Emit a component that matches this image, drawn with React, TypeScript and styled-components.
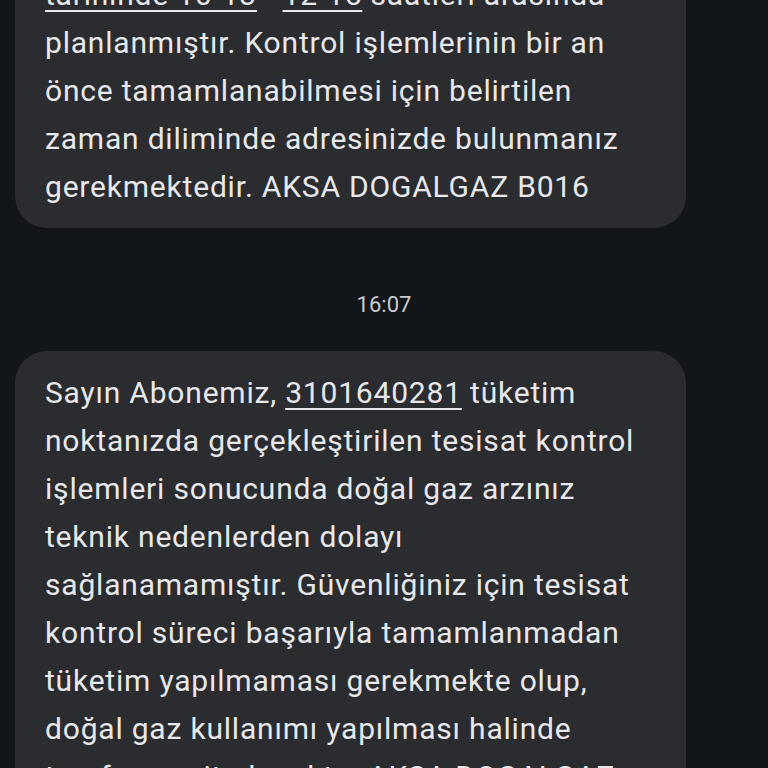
import React from "react";
import styled, { createGlobalStyle } from "styled-components";

type Part = { text: string; link?: boolean };
type MessageType = { lines: Part[][] };

const GlobalStyle = createGlobalStyle`
  html, body {
    margin: 0;
    padding: 0;
    background: #121519;
    overflow: hidden;
  }
  * {
    box-sizing: border-box;
  }
`;

const first: MessageType = {
  lines: [
    [
      { text: "tarihinde 10-13", link: true },
      { text: " - " },
      { text: "12-15", link: true },
      { text: " saatleri arasında" },
    ],
    [{ text: "planlanmıştır. Kontrol işlemlerinin bir an" }],
    [{ text: "önce tamamlanabilmesi için belirtilen" }],
    [{ text: "zaman diliminde adresinizde bulunmanız" }],
    [{ text: "gerekmektedir. AKSA DOGALGAZ B016" }],
  ],
};

const second: MessageType = {
  lines: [
    [
      { text: "Sayın Abonemiz, " },
      { text: "3101640281", link: true },
      { text: " tüketim" },
    ],
    [{ text: "noktanızda gerçekleştirilen tesisat kontrol" }],
    [{ text: "işlemleri sonucunda doğal gaz arzınız" }],
    [{ text: "teknik nedenlerden dolayı" }],
    [{ text: "sağlanamamıştır. Güvenliğiniz için tesisat" }],
    [{ text: "kontrol süreci başarıyla tamamlanmadan" }],
    [{ text: "tüketim yapılmaması gerekmekte olup," }],
    [{ text: "doğal gaz kullanımı yapılması halinde" }],
    [{ text: "tarafınıza ait olacaktır. AKSA DOGALGAZ" }],
  ],
};

const Message = (props: { message: MessageType }) => {
  return (
    <Bubble>
      {props.message.lines.map((line, i) => (
        <Line key={i}>
          {line.map((part, j) =>
            part.link ? <Link key={j}>{part.text}</Link> : <span key={j}>{part.text}</span>
          )}
        </Line>
      ))}
    </Bubble>
  );
};

export default function App() {
  return (
    <>
      <GlobalStyle />
      <Screen>
        <Thread>
          <Message message={first} />
          <Time>16:07</Time>
          <Message message={second} />
        </Thread>
      </Screen>
    </>
  );
}

const Screen = styled.div`
  width: 768px;
  height: 768px;
  overflow: hidden;
  background: #121519;
  font-family: Roboto, "Noto Sans", sans-serif;
`;

// scrolled list: first bubble starts above the visible area
const Thread = styled.div`
  display: flex;
  flex-direction: column;
  align-items: flex-start;
  padding-left: 15px;
  margin-top: -47px;
`;

const Bubble = styled.div`
  width: 671px;
  padding: 18px 30px 17px;
  border-radius: 32px;
  background: #2a2c30;
  color: #e8e8ea;
  font-size: 30px;
  line-height: 48px;
  letter-spacing: 0.8px;
`;

const Line = styled.div`
  white-space: nowrap;
`;

const Link = styled.span`
  text-decoration: underline;
  text-decoration-thickness: 2px;
  text-underline-offset: 5px;
`;

const Time = styled.div`
  align-self: stretch;
  margin: 62px 15px 31px 0;
  text-align: center;
  color: #c9cacc;
  font-size: 22px;
  line-height: 30px;
`;
